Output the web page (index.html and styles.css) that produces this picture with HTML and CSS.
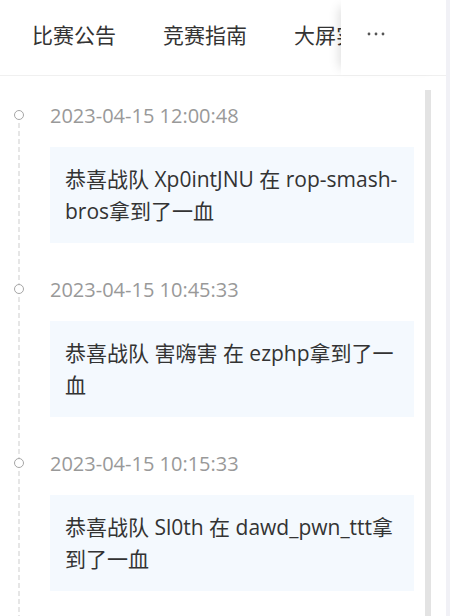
FILE: index.html
```html
<!DOCTYPE html>
<html>
<head>
  <title>比赛公告</title>
  <link rel="stylesheet" href="styles.css">
</head>
<body>
<div class="page">
  <div class="main">
    <div class="tabs">
      <div class="tabs-nav">
        <div class="tab active">比赛公告</div>
        <div class="tab">竞赛指南</div>
        <div class="tab">大屏实况</div>
      </div>
      <div class="tabs-more">
        <svg width="18" height="6" viewBox="0 0 18 6">
          <circle cx="2" cy="3" r="1.4" fill="#555"/>
          <circle cx="9" cy="3" r="1.4" fill="#555"/>
          <circle cx="16" cy="3" r="1.4" fill="#555"/>
        </svg>
      </div>
    </div>
    <div class="content">
      <ul class="timeline">
        <li class="tl-item">
          <div class="tl-axis">
            <span class="tl-lead"></span>
            <span class="tl-dot"></span>
            <span class="tl-tail"></span>
          </div>
          <div class="tl-body">
            <div class="tl-time">2023-04-15 12:00:48</div>
            <div class="tl-card">恭喜战队 Xp0intJNU 在 rop-smash-bros拿到了一血</div>
          </div>
        </li>
        <li class="tl-item">
          <div class="tl-axis">
            <span class="tl-lead"></span>
            <span class="tl-dot"></span>
            <span class="tl-tail"></span>
          </div>
          <div class="tl-body">
            <div class="tl-time">2023-04-15 10:45:33</div>
            <div class="tl-card">恭喜战队 害嗨害 在 ezphp拿到了一血</div>
          </div>
        </li>
        <li class="tl-item">
          <div class="tl-axis">
            <span class="tl-lead"></span>
            <span class="tl-dot"></span>
            <span class="tl-tail"></span>
          </div>
          <div class="tl-body">
            <div class="tl-time">2023-04-15 10:15:33</div>
            <div class="tl-card">恭喜战队 Sl0th 在 dawd_pwn_ttt拿到了一血</div>
          </div>
        </li>
      </ul>
      <div class="scrollbar"><div class="thumb"></div></div>
    </div>
  </div>
  <div class="page-track"></div>
</div>
</body>
</html>
```

FILE: styles.css
```css
html, body {
  margin: 0;
  padding: 0;
  height: 100%;
  overflow: hidden;
}
* {
  box-sizing: border-box;
}
body {
  background: #fff;
  font-family: "Open Sans", "Noto Sans CJK SC", sans-serif;
  color: #333;
}
.page {
  display: flex;
  width: 450px;
  height: 616px;
}
.main {
  flex: 1;
  display: flex;
  flex-direction: column;
  min-width: 0;
}
.page-track {
  width: 4px;
  background: #f1f1f6;
}

/* tabs header */
.tabs {
  display: flex;
  height: 76px;
  border-bottom: 1px solid #f0f0f0;
}
.tabs-nav {
  flex: 1;
  display: flex;
  align-items: flex-start;
  padding-left: 32px;
  overflow: hidden;
  min-width: 0;
}
.tab {
  flex: none;
  height: 77px;
  margin-right: 47px;
  padding-top: 19px;
  font-size: 21px;
  line-height: 30px;
  color: #333;
  font-family: "Noto Sans CJK SC", sans-serif;
  border-bottom: 2px solid transparent;
}
.tab.active {
  border-bottom-color: #1890ff;
}
.tabs-more {
  flex: none;
  width: 105px;
  height: 75px;
  background: #fff;
  display: flex;
  align-items: center;
  padding-left: 26px;
  padding-bottom: 7px;
  box-shadow: -9px 0 10px -7px rgba(0, 0, 0, 0.13);
}

/* scroll area */
.content {
  flex: 1;
  display: flex;
  min-height: 0;
}
.timeline {
  list-style: none;
  margin: 0;
  padding: 25px 11px 0 0;
  width: 425px;
}
.scrollbar {
  width: 6px;
  padding-top: 14px;
}
.thumb {
  height: 100%;
  background: #e3e3e3;
}

.tl-item {
  display: flex;
}
.tl-axis {
  width: 50px;
  flex: none;
  display: flex;
  flex-direction: column;
  align-items: flex-start;
  padding-left: 14px;
}
.tl-lead,
.tl-tail {
  width: 2px;
  margin-left: 4px;
  background: repeating-linear-gradient(to bottom, #e6e6e6 0 5px, transparent 5px 8px);
}
.tl-lead {
  height: 9px;
}
.tl-tail {
  flex: 1;
  margin-top: 3px;
}
.tl-item:first-child .tl-lead {
  visibility: hidden;
}
.tl-dot {
  width: 10px;
  height: 10px;
  border: 1.5px solid #a6a6a6;
  border-radius: 50%;
  background: #fff;
}
.tl-body {
  flex: 1;
  padding-bottom: 32px;
}
.tl-time {
  font-size: 20px;
  line-height: 30px;
  color: #999;
  margin-bottom: 16px;
}
.tl-card {
  background: #f4f9fe;
  padding: 16px 13px 16px 15px;
  font-size: 21px;
  line-height: 32px;
  color: #333;
}
```
